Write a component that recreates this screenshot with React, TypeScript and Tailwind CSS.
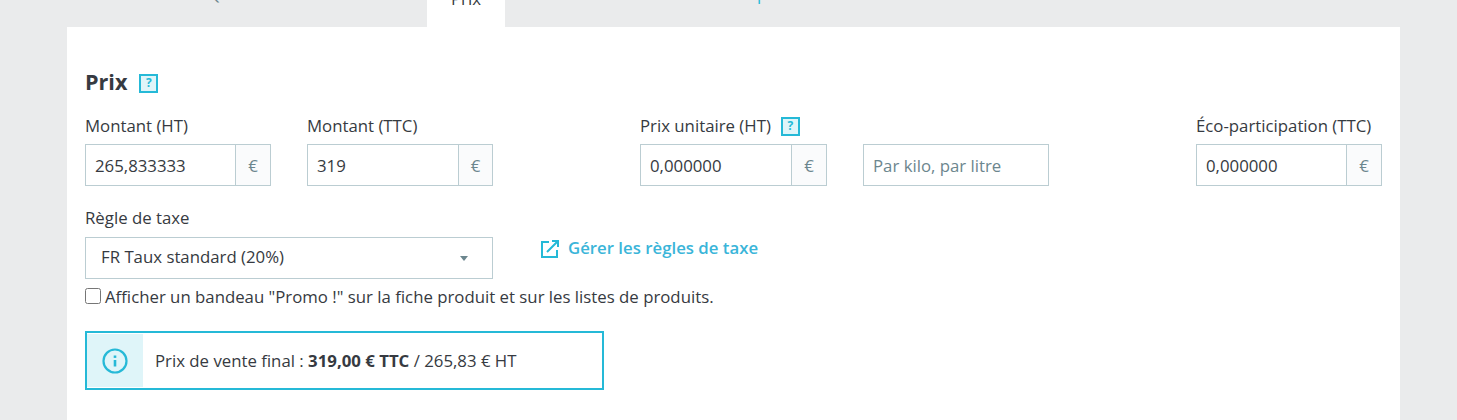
const font = { fontFamily: '"Open Sans", sans-serif' };

function Help() {
  return (
    <span className="flex h-[19px] w-[19px] items-center justify-center border-2 border-[#25b9d7] bg-[#dff5f9] text-[12px] font-bold leading-none text-[#25b9d7]">
      ?
    </span>
  );
}

function PriceField({
  label,
  value,
  help,
  className = "w-[186px]",
  suffixClass = "w-[35px]",
}: {
  label: string;
  value: string;
  help?: boolean;
  className?: string;
  suffixClass?: string;
}) {
  return (
    <div className={`shrink-0 ${className}`}>
      <div className="flex h-[18px] items-center gap-[10px] whitespace-nowrap text-[16.8px] leading-[18px] text-[#363a41]">
        <span>{label}</span>
        {help && <Help />}
      </div>
      <div className="mt-[9px] flex h-[42px] border border-[#bbcdd2]">
        <input
          readOnly
          value={value}
          className="min-w-0 flex-1 bg-white px-[9px] pt-[2px] text-[16.8px] text-[#363a41] outline-none"
        />
        <span className={`flex items-center justify-center border-l border-[#bbcdd2] bg-[#fafbfc] pt-[2px] text-[16.8px] text-[#6c868e] ${suffixClass}`}>
          €
        </span>
      </div>
    </div>
  );
}

export default function App() {
  return (
    <div style={font} className="h-[420px] overflow-hidden bg-[#eaebec] text-[#363a41]">
      <div className="flex h-[27px] overflow-hidden pl-[67px] text-[16.8px] leading-[24px]">
        <div className="-mt-[18px] w-[360px] pl-[141px] text-[#6c868e]">Quantités</div>
        <div className="flex h-[27px] w-[78px] justify-center bg-white">
          <span className="-mt-[13px]">Prix</span>
        </div>
        <div className="-mt-[18px] pl-[239px] text-[#25b9d7]">Options</div>
      </div>

      <div className="ml-[67px] h-[393px] w-[1333px] bg-white px-[18px] pt-[42px]">
        <div className="flex h-[28px] items-center gap-[12px]">
          <h2 className="-mt-[2px] text-[21.6px] font-bold leading-[28px]">Prix</h2>
          <Help />
        </div>

        <div className="mt-[20px] flex">
          <PriceField label="Montant (HT)" value="265,833333" />
          <PriceField label="Montant (TTC)" value="319" className="ml-[36px] w-[186px]" suffixClass="w-[34px]" />
          <PriceField label="Prix unitaire (HT)" value="0,000000" help className="ml-[147px] w-[187px]" />
          <div className="ml-[36px] mt-[27px] w-[186px] shrink-0">
            <input
              readOnly
              placeholder="Par kilo, par litre"
              className="h-[42px] w-full border border-[#bbcdd2] px-[9px] text-[16.8px] text-[#363a41] outline-none placeholder:text-[#6c868e]"
            />
          </div>
          <PriceField label="Éco-participation (TTC)" value="0,000000" className="ml-[147px] w-[186px]" />
        </div>

        <div className="mt-[23px] text-[16.8px] leading-[18px]">Règle de taxe</div>
        <div className="mt-[10px] flex items-start">
          <div className="flex h-[42px] w-[408px] items-center justify-between border border-[#bbcdd2] pl-[15px] pr-[24px] text-[16.8px]">
            <span className="-mt-[2px]">FR Taux standard (20%)</span>
            <span className="h-0 w-0 border-x-[4px] border-t-[5px] border-x-transparent border-t-[#6c868e]" />
          </div>
          <a className="ml-[48px] mt-[1px] flex h-[20px] items-center gap-[9px] whitespace-nowrap text-[16.8px] font-semibold text-[#3ab5d9]">
            <svg className="mt-[2px]" width="18" height="18" viewBox="0 0 18 18" fill="none" stroke="#25b9d7" strokeWidth="2">
              <path d="M8 2H1v15h15v-7" />
              <path d="M6 12 17 1M11 1h6v6" />
            </svg>
            Gérer les règles de taxe
          </a>
        </div>

        <label className="mt-[7px] flex h-[20px] items-center text-[16.8px] leading-[20px]">
          <input type="checkbox" className="mr-[4px] h-[16px] w-[16px]" />
          <span className="mt-[2px]">Afficher un bandeau "Promo !" sur la fiche produit et sur les listes de produits.</span>
        </label>

        <div className="mt-[25px] flex h-[59px] w-[519px] items-stretch border-2 border-[#25b9d7] text-[16.8px]">
          <div className="my-px flex w-[56px] items-center justify-center bg-[#dff5f9]">
            <svg width="26" height="26" viewBox="0 0 26 26" fill="none" stroke="#25b9d7">
              <circle cx="13" cy="13" r="11.5" strokeWidth="2.2" />
              <path d="M13 12v6.5" strokeWidth="2.6" />
              <path d="M13 7.5v2.4" strokeWidth="2.6" />
            </svg>
          </div>
          <div className="flex items-center pl-[12px]">
            <span>
              Prix de vente final : <strong className="font-bold">319,00 € TTC</strong> / 265,83 € HT
            </span>
          </div>
        </div>
      </div>
    </div>
  );
}
